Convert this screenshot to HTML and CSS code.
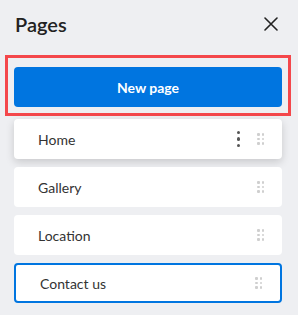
FILE: index.html
```html
<!DOCTYPE html>
<html>
<head>
<meta charset="utf-8">
<link rel="stylesheet" href="styles.css">
</head>
<body>
<div class="panel">
  <div class="header">
    <h1 class="title">Pages</h1>
    <button class="close" aria-label="Close">
      <svg width="14" height="14" viewBox="0 0 14 14"><path d="M1 1L13 13M13 1L1 13" stroke="#222" stroke-width="1.6" stroke-linecap="round"/></svg>
    </button>
  </div>
  <div class="highlight">
    <button class="new-page">New page</button>
  </div>
  <ul class="pages">
    <li class="page raised"><span class="label">Home</span><span class="kebab"><i></i><i></i><i></i></span><span class="handle"><i></i><i></i><i></i><i></i><i></i><i></i></span></li>
    <li class="page"><span class="label">Gallery</span><span class="handle"><i></i><i></i><i></i><i></i><i></i><i></i></span></li>
    <li class="page"><span class="label">Location</span><span class="handle"><i></i><i></i><i></i><i></i><i></i><i></i></span></li>
    <li class="page selected"><span class="label">Contact us</span><span class="handle"><i></i><i></i><i></i><i></i><i></i><i></i></span></li>
  </ul>
</div>
</body>
</html>
```
FILE: styles.css
```css
* { box-sizing: border-box; }
html, body { margin: 0; padding: 0; }
body {
  background: #eeeff2;
  font-family: Lato, "Open Sans", sans-serif;
  color: #333;
  width: 298px;
  height: 315px;
  overflow: hidden;
}
.header {
  display: flex;
  align-items: center;
  justify-content: space-between;
  height: 46px;
  padding: 1px 20px 0 15px;
}
.title {
  margin: 0;
  font-size: 20px;
  font-weight: 600;
  color: #222;
}
.close {
  border: 0;
  background: none;
  padding: 0;
  width: 14px;
  height: 14px;
  display: flex;
}
.highlight {
  margin: 9px 7px 0 5px;
  border: 3px solid #f4474b;
  padding: 9px 6px 6px 6px;
}
.new-page {
  display: block;
  width: 100%;
  height: 40px;
  border: 0;
  border-radius: 4px;
  background: #0075e0;
  color: #fff;
  font-family: inherit;
  font-size: 14px;
  font-weight: 700;
}
.pages {
  list-style: none;
  margin: 3px 16px 0 14px;
  padding: 0;
  display: flex;
  flex-direction: column;
  gap: 8px;
}
.page {
  height: 40px;
  background: #fff;
  border-radius: 4px;
  display: flex;
  align-items: center;
  padding: 0 18px 0 24px;
  font-size: 14px;
  color: #333;
}
.page.raised { box-shadow: 0 3px 8px rgba(0,0,0,0.16); }
.page.selected { border: 2px solid #0075e0; }
.label { flex: 1; }
.kebab {
  display: flex;
  flex-direction: column;
  gap: 3px;
  margin-right: 17px;
}
.kebab i {
  display: block;
  width: 3.5px;
  height: 3.5px;
  border-radius: 50%;
  background: #555;
}
.handle {
  display: grid;
  grid-template-columns: 2.5px 2.5px;
  grid-auto-rows: 2.5px;
  gap: 2px;
}
.handle i {
  display: block;
  background: #cfcfcf;
  border-radius: 1px;
}
```
